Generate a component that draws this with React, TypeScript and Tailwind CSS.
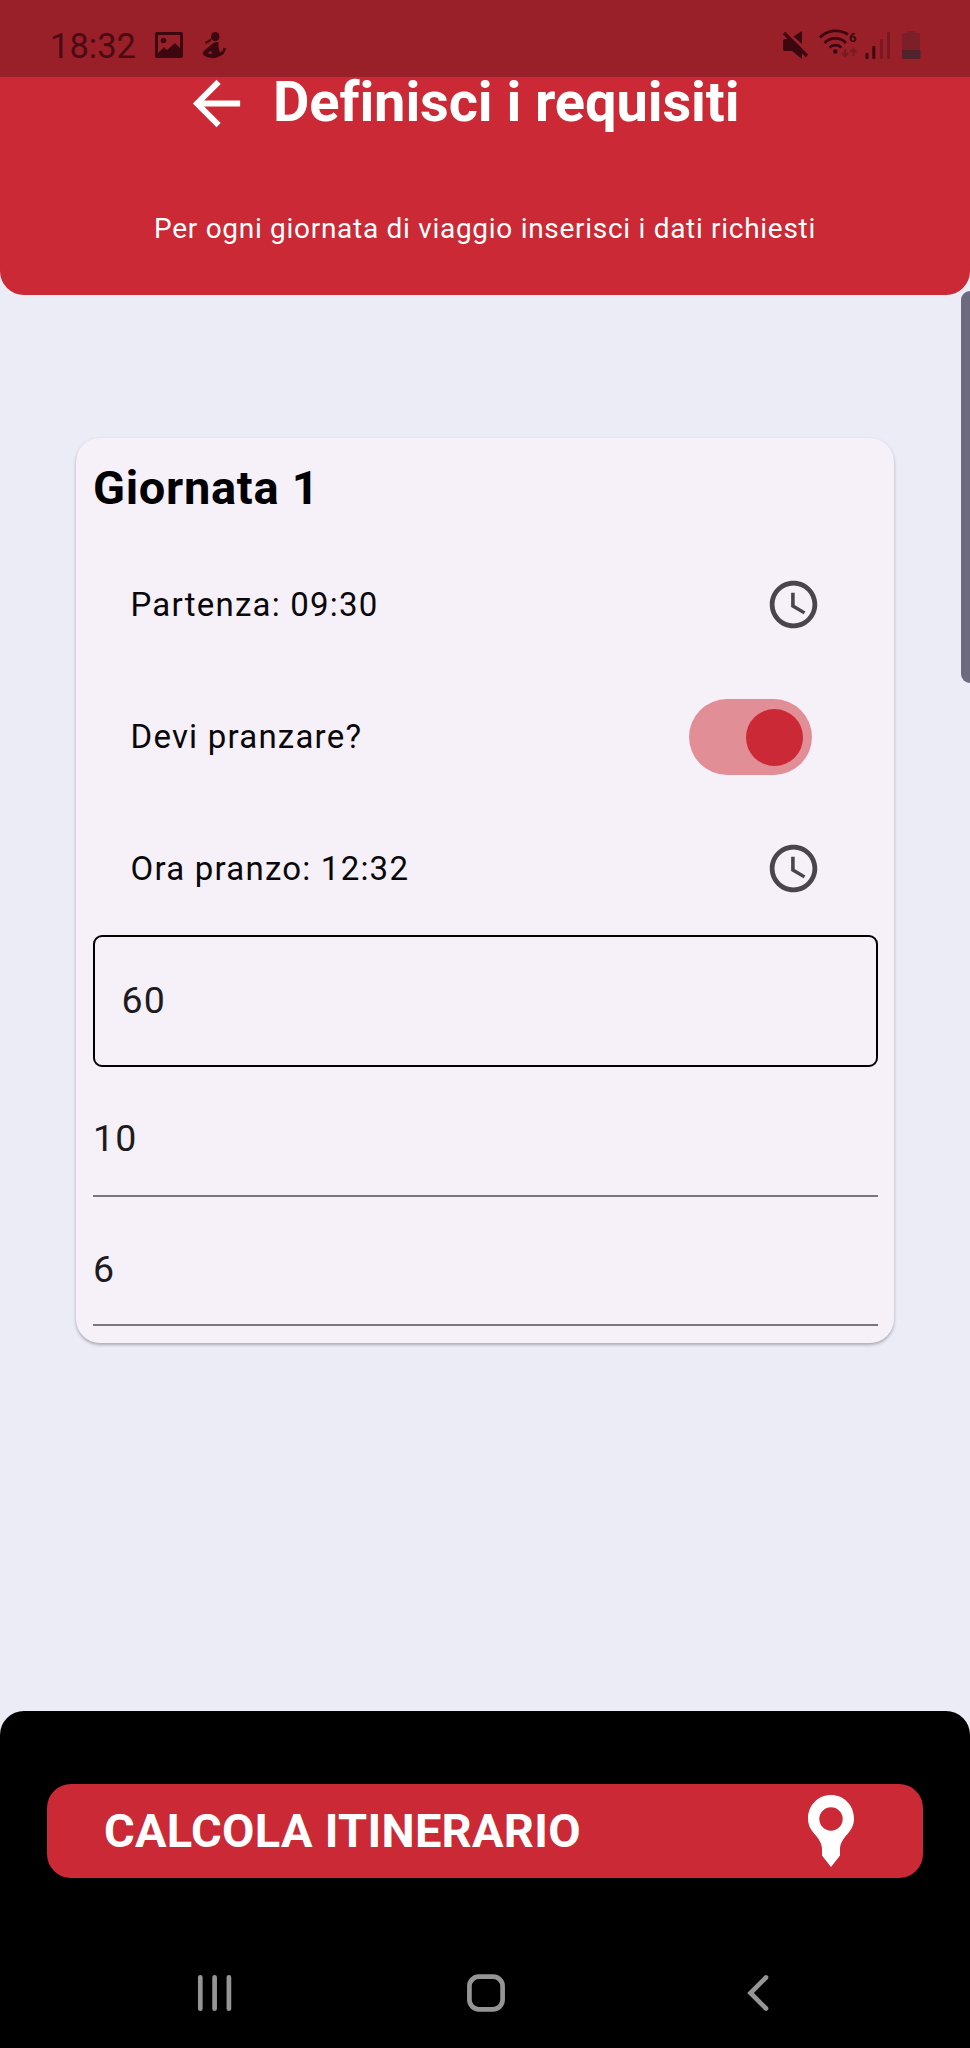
import React from "react";

function StatusIcons() {
  return (
    <svg width="155" height="40" viewBox="780 25 155 40" fill="#3c070f">
      <path d="M783 41q0-2 2-2h6l11-7v27l-10-8h-7q-2 0-2-2z" />
      <path d="M782 29.500l28 26.500V40l-14-12z" fill="#992029" />
      <path d="M793.500 36.500L802 31v13z" />
      <path d="M784 33l23 23" stroke="#3c070f" strokeWidth="3.200" />
      <g fill="none" stroke="#3c070f" strokeWidth="2.800">
        <path d="M820 37.500a22 22 0 0 1 28-3" />
        <path d="M824.500 43a15 15 0 0 1 21.500 0" />
        <path d="M829.500 47.500a9 9 0 0 1 12 0" />
      </g>
      <circle cx="835.300" cy="51.500" r="2.300" />
      <text x="849" y="41.500" fontSize="13" fontWeight="700" fontFamily="Roboto, sans-serif">6</text>
      <g fill="none" stroke="#741b23" strokeWidth="2">
        <path d="M845 49v7m-3-3l3 3 3-3M853.500 56v-7m-3 3l3-3 3 3" />
      </g>
      <rect x="865.500" y="53" width="3" height="6" rx="1" />
      <rect x="872.300" y="46" width="3" height="13" rx="1" />
      <rect x="880" y="39" width="3" height="20" rx="1" fill="#7a1820" />
      <rect x="887" y="32" width="3" height="27" rx="1" fill="#7a1820" />
      <path d="M902 35q0-2 2-2h3v-2h8v2h3q2 0 2 2v15h-18z" fill="#7d1f28" />
      <path d="M902 50h18.500v7q0 2-2 2H904q-2 0-2-2z" fill="#4f2329" />
    </svg>
  );
}

function StatusBar() {
  return (
    <div className="flex h-[76.5px] shrink-0 items-start justify-between bg-[#992029] pt-[25px] pr-[35px] pl-[50px]">
      <div className="flex h-10 items-start">
        <span className="w-[103px] text-[34.5px] leading-[42px] text-[#4a0b13]">18:32</span>
        <svg width="75" height="40" viewBox="153 25 75 40" fill="#3c070f">
          <path
            fillRule="evenodd"
            d="M157 32h24q2 0 2 2v22q0 2-2 2h-24q-2 0-2-2V34q0-2 2-2zm1 3v18l6-6 3 3 8-7 5 5V35z"
          />
          <circle cx="163.500" cy="40.500" r="2.800" />
          <ellipse cx="215.300" cy="36.500" rx="4.200" ry="4.600" />
          <path d="M211 45q4-4 7.500-2.500v5l1.500 5q3-1 3.500-5l2.500 1q-1 6-7 8-4 3-10 1-5-1-6.500-4 1-3 8.500-8.500z" />
          <path d="M205 42l7-4-1 3-5 3z" />
          <path d="M207.500 53.500l3.500-3 1 3.500z" fill="#992029" />
        </svg>
      </div>
      <StatusIcons />
    </div>
  );
}

function ArrowBack() {
  return (
    <svg width="71" height="71" viewBox="0 0 24 24" fill="white" className="-my-3 shrink-0">
      <path d="M20 11H7.830l5.590-5.590L12 4l-8 8 8 8 1.410-1.410L7.830 13H20v-2z" />
    </svg>
  );
}

function Clock() {
  return (
    <svg width="57" height="57" viewBox="0 0 24 24" fill="#49454a">
      <path d="M11.990 2C6.470 2 2 6.480 2 12s4.470 10 9.990 10C17.520 22 22 17.520 22 12S17.520 2 11.990 2zM12 20c-4.420 0-8-3.580-8-8s3.580-8 8-8 8 3.580 8 8-3.580 8-8 8zm.5-13H11v6l5.250 3.150.75-1.230-4.500-2.670z" />
    </svg>
  );
}

function Toggle() {
  return (
    <button
      role="switch"
      aria-checked="true"
      aria-label="Devi pranzare?"
      className="flex h-[75.5px] w-[122.7px] items-center justify-end rounded-full bg-[#e18e97] pr-[9.4px]"
    >
      <span className="size-[57px] rounded-full bg-[#ca2935]" />
    </button>
  );
}

function Row({ label, children }: { label: string; children: React.ReactNode }) {
  return (
    <div className="flex h-[132px] items-center justify-between pl-[38px]">
      <span className="-mt-px text-[33px] leading-[40px] tracking-[1.22px] text-[#0a080b]">{label}</span>
      {children}
    </div>
  );
}

function Card() {
  return (
    <section className="mx-auto mt-[143.5px] h-[905px] w-[818.6px] rounded-[24px] bg-[#f6f1f9] pr-[16.4px] pl-[16.8px] shadow-[0_2px_3px_rgba(0,0,0,0.24),0_1px_5px_rgba(0,0,0,0.06)]">
      <h2 className="pt-[20px] pl-[0.4px] text-[47px] leading-[60px] font-bold tracking-[0.7px] text-black">Giornata 1</h2>
      <div className="mt-[21px]">
        <Row label="Partenza: 09:30">
          <div className="-mt-px pr-[55.6px]"><Clock /></div>
        </Row>
        <Row label="Devi pranzare?">
          <div className="pr-[66px]"><Toggle /></div>
        </Row>
        <Row label="Ora pranzo: 12:32">
          <div className="-mt-px pr-[55.6px]"><Clock /></div>
        </Row>
      </div>
      <div className="flex h-[132px] items-center rounded-[9px] border-[2.4px] border-black pb-[2px] pl-[27px] text-[37.5px] tracking-[1.2px] text-[#1d1b20]">
        60
      </div>
      <div className="flex h-[129.5px] items-center border-b-[2.4px] border-[#7c757f] pt-[14px] pl-[0.4px] text-[37.5px] tracking-[1.2px] text-[#1d1b20]">
        10
      </div>
      <div className="flex h-[129.5px] items-center border-b-[2.4px] border-[#7c757f] pt-[17px] pl-[0.4px] text-[37.5px] tracking-[1.2px] text-[#1d1b20]">
        6
      </div>
    </section>
  );
}

function Pin() {
  return (
    <svg width="46" height="72" viewBox="0 0 46 72" fill="white">
      <path
        fillRule="evenodd"
        d="M23 0C10 0 0 10.500 0 23.500c0 6.500 2.500 11 6.500 15.500 4.500 5 7.500 9.500 7.500 15.500v6L23 72l9-11.500v-6c0-6 3-10.500 7.500-15.500 4-4.500 6.500-9 6.500-15.500C46 10.500 36 0 23 0zm0 12.300a11.700 11.700 0 1 1 0 23.400 11.700 11.700 0 0 1 0-23.400z"
      />
    </svg>
  );
}

function NavBar() {
  return (
    <nav className="mt-[95.5px] flex items-center justify-between pr-[201.5px] pl-[197px]">
      <svg width="35" height="38" viewBox="0 0 35 38" stroke="#959595" strokeWidth="4.700" strokeLinecap="round">
        <path d="M3.300 3.300v31.400M17.600 3.300v31.400M31.900 3.300v31.400" />
      </svg>
      <svg width="38" height="38" viewBox="0 0 38 38" fill="none" stroke="#959595" strokeWidth="4.700" className="-ml-[6px]">
        <rect x="2.400" y="2.700" width="33.200" height="32.600" rx="9.500" />
      </svg>
      <svg width="22" height="38" viewBox="0 0 22 38" fill="none" stroke="#959595" strokeWidth="4.700" strokeLinecap="round">
        <path d="M19 3.500L3.500 19 19 34.500" />
      </svg>
    </nav>
  );
}

export default function App() {
  return (
    <div className="relative flex h-[2048px] w-[970px] flex-col overflow-hidden bg-[#ececf7] font-[Roboto,sans-serif]">
      <StatusBar />
      <header className="flex h-[218px] shrink-0 flex-col items-center rounded-b-[24px] bg-[#ca2935] text-white">
        <div className="flex h-[54px] w-full items-center pl-[181px]">
          <ArrowBack />
          <h1 className="-mt-[4px] pl-[21px] text-[56px] leading-[52px] font-bold tracking-[-0.1px] whitespace-nowrap">
            Definisci i requisiti
          </h1>
        </div>
        <p className="mt-[80px] text-[28px] leading-[36px] tracking-[0.71px] whitespace-nowrap">
          Per ogni giornata di viaggio inserisci i dati richiesti
        </p>
      </header>
      <Card />
      <footer className="mt-auto h-[337.5px] shrink-0 rounded-t-[24px] bg-black pt-[73.5px]">
        <button className="ml-[47.2px] flex h-[94.3px] w-[875.8px] items-center justify-between rounded-[24px] bg-[#ca2935] pr-[69px] pl-[56.8px] text-[47px] font-bold tracking-[0.27px] text-white">
          <span className="-mt-px leading-[56px]">CALCOLA ITINERARIO</span>
          <Pin />
        </button>
        <NavBar />
      </footer>
      <div className="absolute top-[291px] right-0 h-[392px] w-[9px] rounded-l-[9px] bg-[#6d6a7f]" />
    </div>
  );
}
